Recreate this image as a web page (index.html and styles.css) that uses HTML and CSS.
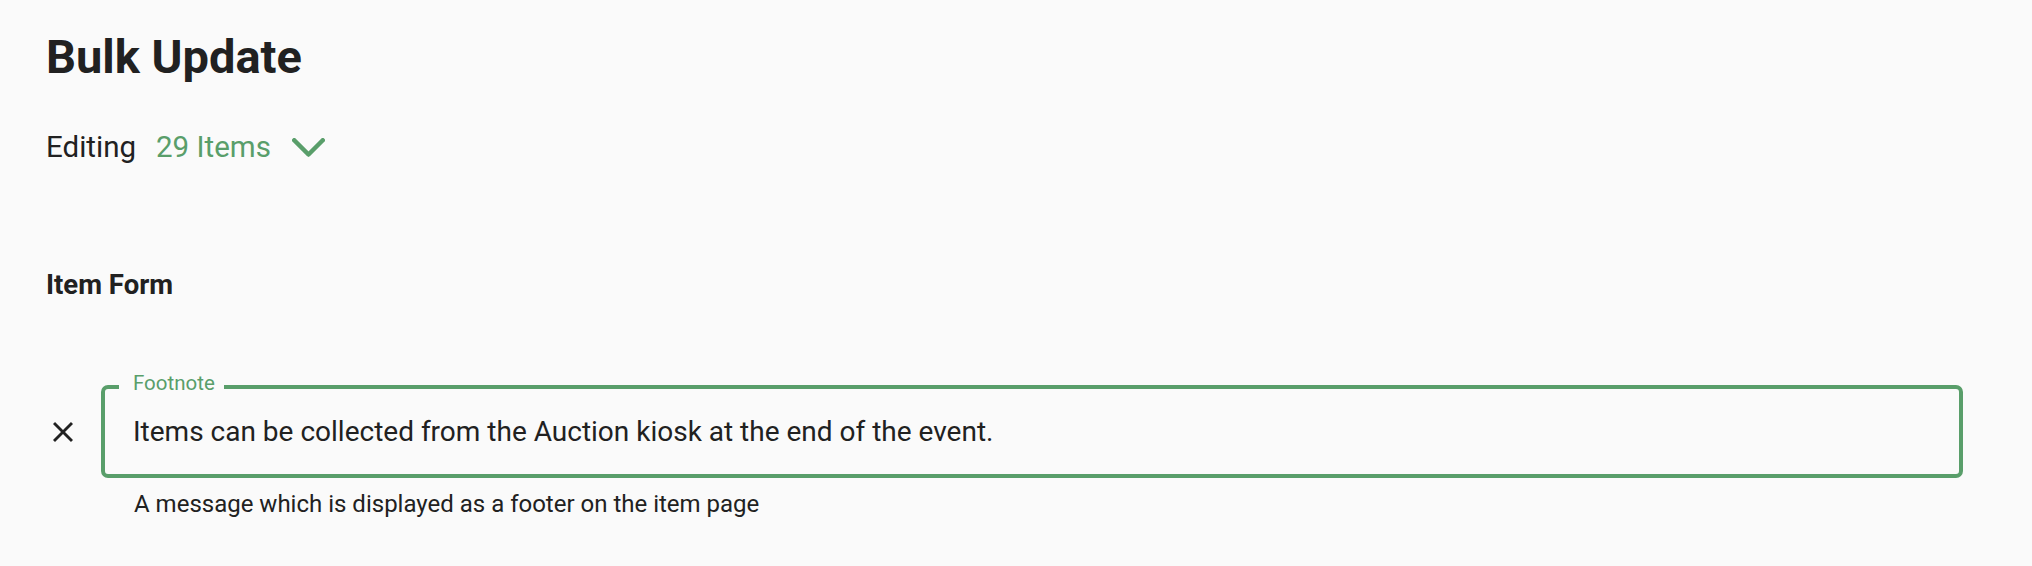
FILE: index.html
```html
<!DOCTYPE html>
<html lang="en">
<head>
<meta charset="UTF-8">
<title>Bulk Update</title>
<link rel="stylesheet" href="styles.css">
</head>
<body>

<h1 class="page-title">Bulk Update</h1>

<div class="editing">
    <span>Editing</span>
    <span class="count">29 Items</span>
    <svg class="chevron" viewBox="0 0 33 19" width="33" height="19">
        <polyline points="2.25,2.25 16.5,16.5 30.75,2.25" fill="none" stroke="#599e6a" stroke-width="4.5" stroke-linecap="round" stroke-linejoin="round"/>
    </svg>
</div>

<h2 class="section-title">Item Form</h2>

<div class="field-row">
    <button class="clear-btn" title="Remove">
        <svg viewBox="5 5 14 14" width="20" height="20">
            <path d="M19 6.41 17.59 5 12 10.59 6.41 5 5 6.41 10.59 12 5 17.59 6.41 19 12 13.41 17.59 19 19 17.59 13.41 12z" fill="#212121"/>
        </svg>
    </button>
    <div class="field">
        <label class="field-label" for="footnote">Footnote</label>
        <input id="footnote" class="field-input" value="Items can be collected from the Auction kiosk at the end of the event.">
    </div>
</div>
<p class="helper">A message which is displayed as a footer on the item page</p>

</body>
</html>
```

FILE: styles.css
```css
body {margin:0;padding:29px 69px 0 46px;background:#fafafa;color:#212121;font-family:Roboto,"Noto Sans",sans-serif;}
.page-title {margin:0;font-size:47px;line-height:56px;font-weight:700;}
.editing {display:flex;align-items:center;gap:20px;margin-top:45px;font-size:29.5px;line-height:34px;}
.editing .count {color:#599e6a;}
.chevron {display:block;margin-left:1px;}
.section-title {margin:105px 0 0;font-size:27.5px;line-height:32px;font-weight:700;}
.field-row {display:flex;align-items:center;gap:21px;margin-top:84px;}
.clear-btn {width:34px;height:34px;padding:0;border:none;background:none;display:flex;align-items:center;justify-content:center;cursor:pointer;}
.clear-btn svg {display:block;}
.field {
    position: relative;
    flex: 1;
    height: 93px;
    box-sizing: border-box;
    border: 4px solid #599e6a;
    border-radius: 7px;
    padding: 0 28px;
    display: flex;
    align-items: center;
}
.field-label {
    position: absolute;
    top: -16px;
    left: 14px;
    padding: 0 9px 0 14px;
    background: #fafafa;
    color: #599e6a;
    font-size: 20.5px;
    line-height: 20px;
}
.field-input {
    width: 100%;
    border: none;
    outline: none;
    background: none;
    padding: 0;
    font-family: inherit;
    font-size: 28px;
    line-height: 32px;
    color: #212121;
}
.helper {margin:12px 0 0 88px;font-size:24px;line-height:28px;}
```
